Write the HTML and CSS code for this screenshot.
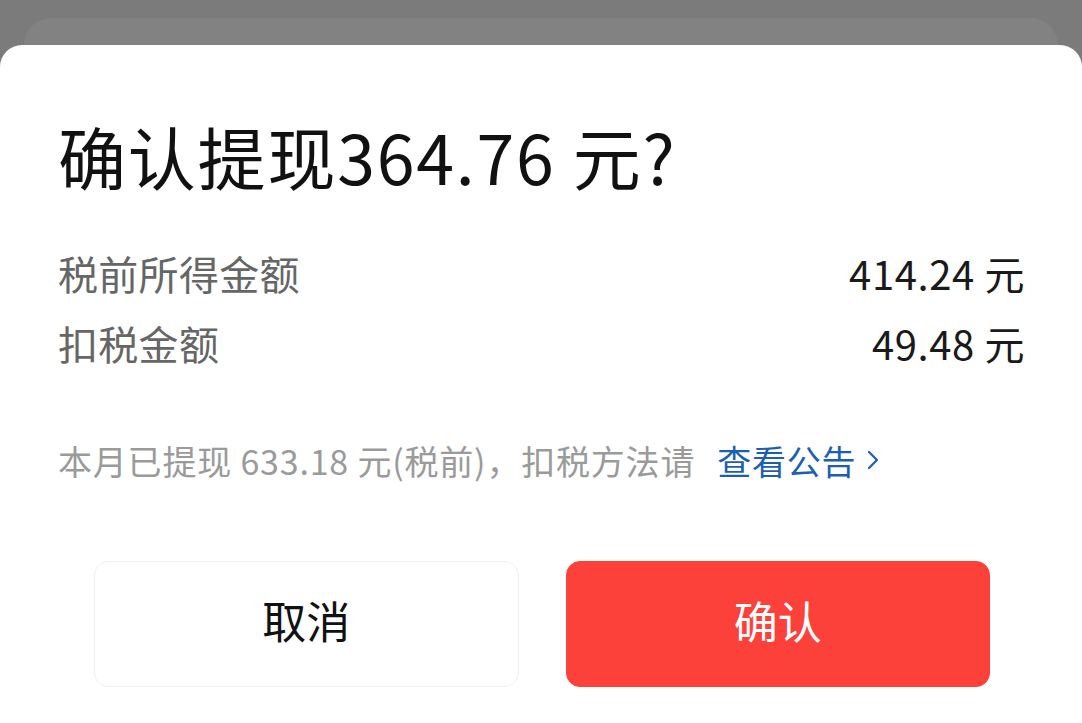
FILE: index.html
```html
<!DOCTYPE html>
<html lang="zh-CN">
<head>
<meta charset="utf-8">
<link rel="stylesheet" href="styles.css">
</head>
<body>
<div class="backdrop"><div class="backcard"></div></div>
<div class="sheet">
  <h1 class="title">确认提现364.76 元?</h1>
  <div class="rows">
    <div class="row"><span class="label">税前所得金额</span><span class="value">414.24 元</span></div>
    <div class="row"><span class="label">扣税金额</span><span class="value">49.48 元</span></div>
  </div>
  <p class="note">本月已提现 633.18 元(税前)，扣税方法请<a class="link">查看公告<svg class="chev" width="14" height="22" viewBox="0 0 14 22"><polyline points="3,3 11,11 3,19" fill="none" stroke="#1d5fae" stroke-width="2.2" stroke-linecap="round" stroke-linejoin="round"/></svg></a></p>
  <div class="actions">
    <button class="btn btn-cancel">取消</button>
    <button class="btn btn-ok">确认</button>
  </div>
</div>
</body>
</html>
```
FILE: styles.css
```css
html, body {
  margin: 0;
  padding: 0;
  height: 100%;
}
body {
  background: #7b7b7b;
  font-family: "Noto Sans CJK SC", "Noto Sans", sans-serif;
  overflow: hidden;
}
.backdrop {
  padding: 18px 24px 0;
}
.backcard {
  height: 27px;
  background: #828282;
  border-radius: 30px 30px 0 0;
}
.sheet {
  background: #fff;
  border-radius: 22px 22px 0 0;
  height: 678px;
  box-sizing: border-box;
  padding: 66px 57px 0 58px;
}
.title {
  margin: 0;
  font-size: 68px;
  line-height: 90px;
  font-weight: 400;
  color: #111;
  letter-spacing: 1.8px;
}
.rows {
  margin-top: 37px;
}
.row {
  display: flex;
  justify-content: space-between;
  align-items: center;
  height: 70px;
}
.label {
  font-size: 40px;
  color: #666;
  letter-spacing: 0.3px;
}
.value {
  font-size: 40px;
  color: #1a1a1a;
  letter-spacing: 0.6px;
}
.note {
  margin: 58px 0 0;
  font-size: 34px;
  line-height: 50px;
  color: #9a9a9a;
  white-space: nowrap;
  letter-spacing: 0.8px;
}
.link {
  color: #1d5fae;
  margin-left: 22px;
}
.chev {
  margin-left: 10px;
  vertical-align: 4px;
}
.actions {
  margin-top: 75px;
  padding: 0 35px 0 36px;
  display: flex;
  gap: 47px;
}
.btn {
  flex: 1;
  height: 126px;
  padding: 0 0 9px;
  border-radius: 14px;
  font-family: inherit;
  font-size: 44px;
  font-weight: 400;
  cursor: pointer;
}
.btn-cancel {
  background: #fff;
  border: 1px solid #f0f0f0;
  color: #111;
}
.btn-ok {
  background: #fc403a;
  border: 1px solid #fc403a;
  color: #fff;
}
```
